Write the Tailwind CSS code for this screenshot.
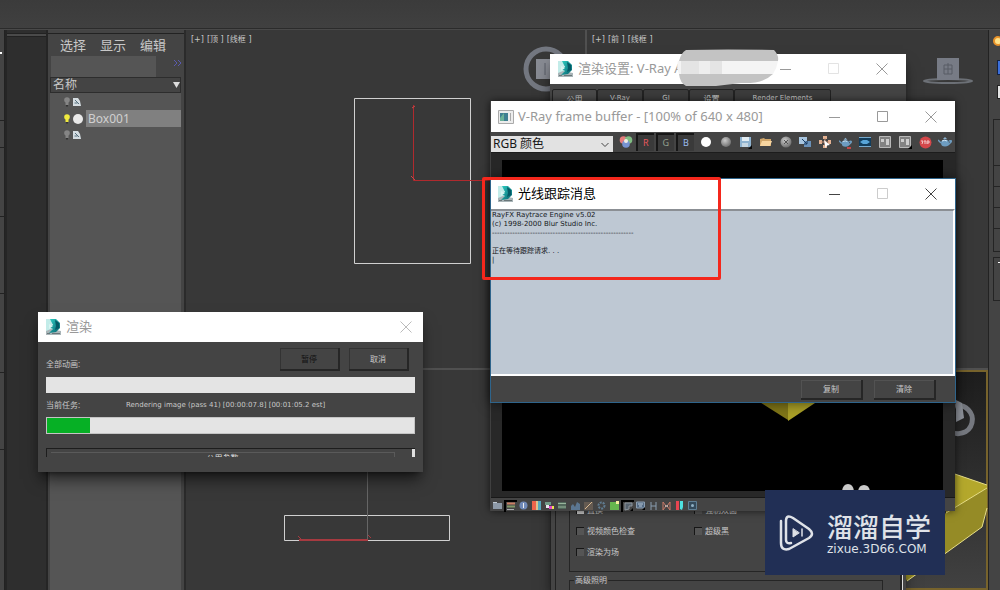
<!DOCTYPE html>
<html lang="zh-CN">
<head>
<meta charset="utf-8">
<meta name="viewport" content="width=device-width, initial-scale=1">
<title>V-Ray 渲染</title>
<script src="https://cdn.jsdelivr.net/npm/@tailwindcss/browser@4"></script>
</head>
<body class="bg-[#383838] font-['Noto_Sans','Noto_Sans_CJK_SC',sans-serif] text-[#c8c8c8]">
<svg class="absolute size-0" aria-hidden="true">
  <defs>
    <linearGradient id="teal" x1="0" y1="0" x2="1" y2="1"><stop offset="0" stop-color="#2fd0c4"/><stop offset="1" stop-color="#045f6c"/></linearGradient>
    <radialGradient id="ball" cx=".4" cy=".35" r=".7"><stop offset="0" stop-color="#c9c9c9"/><stop offset="1" stop-color="#6a6a6a"/></radialGradient>
  </defs>
  <symbol id="max" viewBox="0 0 16 16">
    <path d="M0 0h9l-4 8 4 5H0z" fill="#c3ece9"/><path d="M0 12l5-2 10 2v4H0z" fill="#a9b5b8"/>
    <path d="M4 0h6l4 4v5l-4 4-7 1 4-4-4-2 4-2z" fill="url(#teal)"/>
    <path d="M3 5l4 2-4 3z" fill="#d9f5f2"/><path d="M9 1l4 3v5l-4 2 1-4z" fill="#045a66"/>
    <path d="M1 14.500h3M6 14.500h8" stroke="#6b777a"/>
  </symbol>
  <symbol id="min" viewBox="0 0 12 12"><path d="M0 6.500h11" stroke="currentColor"/></symbol>
  <symbol id="sq" viewBox="0 0 12 12"><path d="M.5 .5h10v10H.5z" fill="none" stroke="currentColor"/></symbol>
  <symbol id="x" viewBox="0 0 12 12"><path d="M.5 .5l11 11M11.500 .5l-11 11" fill="none" stroke="currentColor"/></symbol>
  <symbol id="bulb" viewBox="0 0 6 10"><circle cx="3" cy="3" r="2.800" fill="currentColor"/><path d="M1.500 5h3v3h-3z" fill="currentColor"/><path d="M2 8h2v1.500H2z" fill="#333"/></symbol>
  <symbol id="obj" viewBox="0 0 8 8"><path d="M0 0h5l2 3 1 5H0z" fill="#d5dde2"/><path d="M2 2l4 4M1.500 5h3" stroke="#56707e"/></symbol>
  <symbol id="pot" viewBox="0 0 14 14"><ellipse cx="7" cy="8" rx="4" ry="3.500" fill="#6d9cc0"/><path d="M3 8L0 5M11 6q3-1 2 1l-3 3" stroke="#6d9cc0" stroke-width="1.500" fill="none"/><path d="M5 4h4l-2-2z" fill="#8fb5d2"/><path d="M4 6q3-1.500 5 0" stroke="#d3e6f4" fill="none"/></symbol>
</svg>

<main class="relative flex min-h-screen w-full flex-col overflow-hidden">
  <header class="h-[29px] shrink-0 border-b border-[#2b2b2b] bg-linear-to-b from-[#3b3b3b] to-[#404040]"></header>
  <div class="flex flex-1 border-t border-[#494949]">
    <div class="w-[5px] shrink-0 border-r border-[#222] bg-[#444] pt-[22px]">
      <div class="h-[2px] w-[2px] bg-white"></div>
      <div class="mt-[66px] h-[28px] border-y border-[#222]"></div>
      <div class="mt-[68px] h-[78px] border-y border-[#222]"></div>
      <div class="mt-[78px] h-[78px] border-y border-[#222]"></div>
    </div>
    <div class="w-[43px] shrink-0 border-x-2 border-[#252525] bg-[#2e2e2e] pt-[3px]"><div class="h-1 border-y border-[#222] bg-[#4a4a4a]"></div></div>

    <aside class="flex w-[138px] shrink-0 flex-col border-r-2 border-[#2b2b2b] bg-[#444] pt-[3px]">
      <nav class="flex h-[23px] items-center gap-[14px] border-t border-[#222] pl-3 text-[13px] leading-4">
        <a href="#select">选择</a><a href="#display">显示</a><a href="#edit">编辑</a>
      </nav>
      <div class="flex h-[21px] justify-between pr-[2px] pl-[3px]">
        <input aria-label="搜索" class="h-[21px] w-[105px] bg-[#555] outline-none">
        <button aria-label="更多" class="flex pt-[3px]"><svg class="h-2 w-[9px]" viewBox="0 0 9 8"><path d="M1 1l3 3-3 3M5 1l3 3-3 3" fill="none" stroke="#5a5ab0"/></svg></button>
      </div>
      <div class="mr-[3px] ml-[2px] flex h-4 items-center justify-between border border-[#2d2d2d] bg-[#444] pl-[2px] text-[12px] leading-4">
        <span>名称</span><svg class="h-2 w-[7px]" viewBox="0 0 7 8"><path d="M0 1h7L3.500 7z" fill="#ddd"/></svg>
      </div>
      <ul class="mr-[3px] ml-[2px] flex flex-1 flex-col bg-[#555]">
        <li class="flex h-[17px] items-center gap-[3px] pl-[14px]"><svg class="h-[10px] w-[6px] text-[#858585]"><use href="#bulb"/></svg><svg class="h-2 w-2"><use href="#obj"/></svg></li>
        <li class="flex h-[17px] items-center gap-[3px] pl-[14px]"><svg class="h-[10px] w-[6px] text-[#f0ea3f]"><use href="#bulb"/></svg><span class="size-[10px] rounded-full bg-[#e9e9e9]"></span><span class="h-[17px] flex-1 bg-[#808080] pl-[2px] text-[12px] leading-[17px] text-[#d0d0d0]">Box001</span></li>
        <li class="flex h-[15px] items-center gap-[3px] pl-[14px]"><svg class="h-[10px] w-[6px] text-[#858585]"><use href="#bulb"/></svg><svg class="h-2 w-2"><use href="#obj"/></svg></li>
      </ul>
    </aside>

    <section class="grid flex-1 grid-cols-2 grid-rows-[17fr_11fr] overflow-hidden bg-[#383838] font-['DejaVu_Sans','Noto_Sans_CJK_SC',sans-serif] text-[8px] leading-[10px]">
      <div class="relative border-r-2 border-b-2 border-[#505050] pt-[5px] pl-[5px]">
        <p class="flex gap-[3px]"><span>[+]</span><span>[顶 ]</span><span>[线框 ]</span></p>
        <svg class="absolute top-0 left-0 h-[340px] w-[400px]" viewBox="186 30 400 340" fill="none">
          <path d="M354.500 98.500h116v165h-116z" stroke="#d0d0d0"/>
          <path d="M413.500 105v75.500H490" stroke="#b02a2e"/><path d="M412 108l3-2M411 176l4 4" stroke="#c94848"/>
          <circle cx="546" cy="69" r="20" stroke="#737780" stroke-width="5"/>
          <path d="M536 59h20v20h-20z" fill="#888b93"/><path d="M545 63v12" stroke="#5a5e68"/>
        </svg>
      </div>
      <div class="relative border-b-2 border-[#505050] pt-[5px] pl-[5px]">
        <p class="flex gap-[3px]"><span>[+]</span><span>[前 ]</span><span>[线框 ]</span></p>
        <svg class="absolute top-0 left-0 h-[340px] w-[400px]" viewBox="587 30 400 340" fill="none">
          <ellipse cx="948" cy="81" rx="24" ry="2" stroke="#6c7076" stroke-width="2"/>
          <path d="M937 58h22v22h-22z" fill="#777b85"/><path d="M944 65h8v9h-8zM948 63v11M944 69h8" stroke="#585c65"/>
        </svg>
      </div>
      <div class="relative border-r-2 border-[#505050]">
        <svg class="absolute top-0 left-0 h-[220px] w-[400px]" viewBox="186 370 400 220" fill="none">
          <path d="M284.500 515.500h165v25h-165z" stroke="#d0d0d0"/>
          <path d="M367.500 470v70" stroke="#666"/><path d="M299 540h69" stroke="#a63a40" stroke-width="2"/><path d="M298 536l4 4M368 535l3 3" stroke="#a63a40"/>
        </svg>
      </div>
      <div class="relative border-2 border-[#77632c] bg-linear-to-b from-[#1d1d1d] to-[#414141]">
        <svg class="absolute -top-[2px] right-[-2px] h-[220px] w-[400px]" viewBox="587 370 400 220" fill="none">
          <path d="M954 406a14 14 0 1 1-6 24" stroke="#75787f" stroke-width="5"/>
          <path d="M955 400l6 3 2 15-8 4z" fill="#8a8e96"/>
          <path d="M945 471l41 14v3l-41 26z" fill="#b4a82c"/>
          <path d="M890 550l55-37 41-25v20l-5 19-75 54z" fill="#958b26"/>
          <path d="M945 471l41 14M945 513l41-25M986 508l-5 19-75 54" stroke="#e8df86"/>
        </svg>
      </div>
    </section>

    <aside class="w-3 shrink-0 overflow-hidden border-l border-[#222] bg-[#444] pt-[6px] pl-1">
      <div class="size-[10px] rounded-full border-2 border-[#e8922a] bg-[#ffe28a]"></div>
      <div class="mt-[14px] ml-1 h-[15px] w-4 border border-[#152342] bg-[#3b6fdc]"></div>
      <div class="mt-[10px] ml-1 h-[14px] w-4 border border-[#222] bg-[#e4e4e4]"></div>
      <div class="mt-5 h-[47px] w-4 border border-[#242424]"></div>
      <div class="h-[21px] w-4 border border-t-0 border-[#242424]"></div>
      <div class="h-[21px] w-4 border border-t-0 border-[#242424]"></div>
      <div class="h-[21px] w-4 border border-t-0 border-[#242424]"></div>
      <div class="h-[23px] w-4 border border-t-0 border-[#242424]"></div>
      <div class="mt-[5px] h-[44px] w-4 border border-[#242424] pt-1 pl-1"><div class="h-px w-2 bg-white"></div></div>
    </aside>
  </div>

  <!-- Render settings -->
  <section class="absolute top-[54px] bottom-0 left-[550px] flex w-[356px] flex-col bg-[#444] shadow-lg shadow-black/60">
    <header class="flex h-[30px] shrink-0 items-center bg-white pl-2 text-[#999]">
      <svg class="size-4"><use href="#max"/></svg>
      <h2 class="ml-1 flex-1 text-[13px] whitespace-nowrap">渲染设置: V-Ray A</h2>
      <button aria-label="最小化" class="mr-9"><svg class="size-3"><use href="#min"/></svg></button>
      <button aria-label="最大化" class="mr-9 text-[#e3e3e3]"><svg class="size-3"><use href="#sq"/></svg></button>
      <button aria-label="关闭" class="mr-[18px]"><svg class="size-3"><use href="#x"/></svg></button>
    </header>
    <svg class="absolute -top-[5px] left-[126px] h-[38px] w-[103px]" viewBox="0 0 103 38" fill="#c3c3c3">
      <path d="M10 1Q50 0 98 1q5 5 4 11H3Q5 4 10 1zM3 25h94Q87 35 65 34L40 37H10Q4 34 3 25z"/><path d="M2 12h100q-1 7-5 13H3Q0 18 2 12z" fill="#f4f4f4"/><path d="M5 12h18v13H5zM34 12h12v13H34z" fill="#e4e4e4"/><path d="M23 12h11v13H23z" fill="#eee"/>
    </svg>
    <nav class="ml-[2px] flex pt-[5px] text-[8px] leading-[15px]">
      <button class="h-[18px] w-[45px] rounded-t-xs border border-[#222] bg-[#4a4a4a]">公用</button>
      <button class="h-[18px] w-[46px] rounded-t-xs border border-[#222] bg-[#3c3c3c] font-['DejaVu_Sans'] text-[7px]">V-Ray</button>
      <button class="h-[18px] w-[46px] rounded-t-xs border border-[#222] bg-[#3c3c3c] font-['DejaVu_Sans'] text-[7px]">GI</button>
      <button class="h-[18px] w-[45px] rounded-t-xs border border-[#222] bg-[#3c3c3c]">设置</button>
      <button class="h-[18px] w-[97px] rounded-t-xs border border-[#222] bg-[#3c3c3c] font-['DejaVu_Sans'] text-[7px]">Render Elements</button>
    </nav>
    <div class="flex flex-1 border-l border-[#222] pl-1">
      <div class="flex flex-1 flex-col border-l border-[#222] pr-[17px] pl-[13px] text-[8px] leading-3">
        <fieldset class="flex flex-1 flex-col justify-end border border-[#252525] px-[6px] pb-[13px]">
          <div class="grid grid-cols-[118px_1fr] gap-y-[9px]">
            <label class="flex items-center gap-[3px]"><input type="checkbox" checked class="size-2 appearance-none border-t border-l border-[#161616] bg-[#555] checked:bg-[#ccc]">置换</label>
            <label class="flex items-center gap-[3px]"><input type="checkbox" class="size-2 appearance-none border-t border-l border-[#161616] bg-[#555]">强制双面</label>
            <label class="flex items-center gap-[3px]"><input type="checkbox" class="size-2 appearance-none border-t border-l border-[#161616] bg-[#555]">视频颜色检查</label>
            <label class="flex items-center gap-[3px]"><input type="checkbox" class="size-2 appearance-none border-t border-l border-[#161616] bg-[#555]">超级黑</label>
            <label class="flex items-center gap-[3px]"><input type="checkbox" class="size-2 appearance-none border-t border-l border-[#161616] bg-[#555]">渲染为场</label>
          </div>
        </fieldset>
        <fieldset class="mt-[2px] h-4 border border-b-0 border-[#252525] pl-1"><legend class="px-[1px]">高级照明</legend></fieldset>
      </div>
      <div class="mr-[3px] w-[3px] border-l-2 border-[#222] bg-[#ddd]"></div>
    </div>
  </section>

  <!-- Frame buffer -->
  <section class="absolute top-[101px] left-[490px] flex h-[410px] w-[465px] flex-col border-l border-[#404040] bg-[#444] shadow-[0_0_8px_rgba(0,0,0,0.65)]">
    <header class="flex h-[31px] shrink-0 items-center bg-white pl-[7px] text-[#999]">
      <svg class="h-[14px] w-4" viewBox="0 0 16 14"><path d="M.5 .5h15v13H.5z" fill="#ececec" stroke="#aaa"/><path d="M2 3h8v8H2z" fill="#3f7f91"/><path d="M2 8l4-5v8H2z" fill="#6bb197"/><path d="M12.500 3v8" stroke="#aaa"/></svg>
      <h2 class="ml-1 flex-1 text-[13px] whitespace-nowrap">V-Ray frame buffer - [100% of 640 x 480]</h2>
      <button aria-label="最小化" class="mr-9"><svg class="size-3"><use href="#min"/></svg></button>
      <button aria-label="最大化" class="mr-9"><svg class="size-3"><use href="#sq"/></svg></button>
      <button aria-label="关闭" class="mr-[18px]"><svg class="size-3"><use href="#x"/></svg></button>
    </header>
    <div class="flex h-[21px] shrink-0 items-center border-b border-[#1c1c1c]">
      <div class="relative mt-1 mr-[3px] h-4 w-[122px] shrink-0">
        <select aria-label="通道" class="block h-4 w-full appearance-none bg-[#e2e2e2] pl-[2px] text-[12px] leading-4 text-[#161616]"><option>RGB 颜色</option></select>
        <svg class="pointer-events-none absolute top-[6px] right-1 h-[6px] w-2" viewBox="0 0 8 6" fill="none"><path d="M.5 1L4 4.500 7.500 1" stroke="#444"/></svg>
      </div>
      <button aria-label="通道混合" class="flex w-5 justify-center"><svg class="size-[14px]" viewBox="0 0 14 14"><circle cx="4.500" cy="5" r="3.800" fill="#e57b7b"/><circle cx="9.500" cy="5" r="3.800" fill="#80bd83"/><circle cx="7" cy="9" r="3.800" fill="#7793d2"/><circle cx="7" cy="6" r="2" fill="#f1ece5"/></svg></button>
      <button class="h-[18px] w-[18px] border-t-2 border-l-2 border-[#171717] bg-[#3a3a3a] text-[9px] leading-4 text-[#e8585e]">R</button>
      <button class="ml-[2px] h-[18px] w-[18px] border-t-2 border-l-2 border-[#171717] bg-[#3a3a3a] text-[9px] leading-4 text-[#93a08e]">G</button>
      <button class="ml-[2px] h-[18px] w-[18px] border-t-2 border-l-2 border-[#171717] bg-[#3a3a3a] text-[9px] leading-4 text-[#9abdee]">B</button>
      <button aria-label="Alpha" class="ml-[2px] flex w-5 justify-center"><span class="size-[10px] rounded-full bg-white"></span></button>
      <button aria-label="单色" class="flex w-5 justify-center"><svg class="size-[10px]" viewBox="0 0 10 10"><circle cx="5" cy="5" r="5" fill="url(#ball)"/></svg></button>
      <button aria-label="保存" class="flex w-5 justify-center"><svg class="size-[14px]" viewBox="0 0 14 14"><path d="M1 2h11v10H1z" fill="#8eb2cf"/><path d="M3 2h7v4H3z" fill="#e3edf3"/><path d="M3 8h6v4H3z" fill="#c4d5e1"/><path d="M13 10v4H9z" fill="#090909"/></svg></button>
      <button aria-label="打开" class="flex w-5 justify-center"><svg class="size-[14px]" viewBox="0 0 14 14"><path d="M1 4l4-1 1 1h6v7H1z" fill="#d2a76b"/><path d="M3 6h10l-2 5H1z" fill="#f7d5a0"/></svg></button>
      <button aria-label="清除图像" class="flex w-5 justify-center"><svg class="size-[12px]" viewBox="0 0 12 12"><circle cx="6" cy="6" r="5.500" fill="url(#ball)"/><path d="M4 4l4 4M8 4L4 8" stroke="#555"/></svg></button>
      <button aria-label="复制到 MAX" class="flex w-5 justify-center"><svg class="size-[14px]" viewBox="0 0 14 14"><path d="M1 2h8v7H1z" fill="#a8c5df"/><path d="M6 6h7v6H6z" fill="#6a91b9"/><path d="M4 4l5 5M9 6v3H6" stroke="#183b63" fill="none"/></svg></button>
      <button aria-label="跟踪鼠标" class="flex w-5 justify-center"><svg class="size-[14px]" viewBox="0 0 14 14"><path d="M5 1h4v3H5zM5 10h4v3H5zM1 5h3v4H1zM10 5h3v4h-3z" fill="#e4b292"/><path d="M7 3v8M3 7h8" stroke="#c98e70"/><path d="M6 5l6 5-3 .5L7.500 13z" fill="#fff"/></svg></button>
      <button aria-label="区域渲染" class="flex w-5 justify-center"><svg class="size-[13px]"><use href="#pot"/><path d="M8 12h4" stroke="#c44848" stroke-width="2"/></svg></button>
      <button aria-label="链接" class="flex w-5 justify-center"><svg class="size-[14px]" viewBox="0 0 14 14"><path d="M1 2h12v10H1z" fill="#123d5c"/><path d="M1 2.500h12M1 11.500h12" stroke="#76a9cd"/><path d="M2 7l3-2h4l3 2-3 2H5z" fill="#58a5d8"/></svg></button>
      <button aria-label="比较" class="flex w-5 justify-center"><svg class="size-[14px]" viewBox="0 0 14 14"><path d="M1.500 1.500h11v11h-11z" fill="#828282" stroke="#b8b8b8"/><path d="M3 4h3v3H3zM8 4h3v6H8z" fill="#ccc"/></svg></button>
      <button aria-label="比较选项" class="flex w-5 justify-center"><svg class="size-[14px]" viewBox="0 0 14 14"><path d="M1.500 1.500h11v11h-11z" fill="#828282" stroke="#b8b8b8"/><path d="M3 4h3v3H3zM8 4h3v6H8z" fill="#ccc"/><path d="M14 10v4h-4z" fill="#000"/></svg></button>
      <button aria-label="停止" class="flex w-5 justify-center"><svg class="size-[13px]" viewBox="0 0 13 13"><circle cx="6.500" cy="6.500" r="6" fill="#d4474a"/><path d="M2 5h2L3 8M5 5h2M6 5v3M8 8V5h2v2H8" stroke="#f3c9c9" fill="none"/></svg></button>
      <button aria-label="渲染" class="flex w-5 justify-center"><svg class="size-[14px]"><use href="#pot"/></svg></button>
    </div>
    <div class="flex-1 bg-[#282828] px-3 pt-[7px] pb-[6px] pl-[11px]">
      <svg class="size-full bg-black" viewBox="502 160 441 331" preserveAspectRatio="none"><path d="M755 399l33 21V399z" fill="#807618"/><path d="M788 399h33l-33 22z" fill="#aaa027"/><path d="M842 491q1-7 6-7t6 7M858 491q1-6 6-6t6 6" fill="#c9c9c9"/></svg>
    </div>
    <div class="flex h-4 shrink-0 items-center border-t border-[#181818] text-[#91a8c1]">
      <button aria-label="颜色校正" class="flex w-[13px] justify-center"><svg class="size-[9px]" viewBox="0 0 9 9"><path d="M0 2h9v6H0z" fill="#8e9aa8"/><path d="M0 1h4v1H0z" fill="#c0c8d0"/></svg></button>
      <button aria-label="层" class="flex h-3 w-[13px] items-center justify-center border-t-2 border-l-2 border-black"><svg class="size-[9px]" viewBox="0 0 9 9"><path d="M0 1.500h8" stroke="#cc8065" stroke-width="2"/><path d="M0 4.500h8" stroke="#819868" stroke-width="2"/><path d="M0 7.500h7" stroke="#adafb3"/></svg></button>
      <button aria-label="像素信息" class="flex w-[13px] justify-center"><svg class="size-[9px]" viewBox="0 0 9 9"><circle cx="4.500" cy="4.500" r="4" fill="#7089b7"/><path d="M4.500 2v5" stroke="#eee"/></svg></button>
      <button aria-label="白平衡" class="flex w-[13px] justify-center"><svg class="size-[9px]" viewBox="0 0 9 9"><path d="M0 0h4v9H0z" fill="#ed644b"/><path d="M4 0h2v9H4z" fill="#dbc38c"/><path d="M6 0h3v9H6z" fill="#56a9bd"/></svg></button>
      <button aria-label="色相" class="flex w-[13px] justify-center"><svg class="size-[9px]" viewBox="0 0 9 9"><path d="M0 1h6v3H0z" fill="#709b87"/><path d="M1 4h3v3H1z" fill="#e7e9ee"/><path d="M4 5h3v3H4z" fill="#e34ac8"/><path d="M7 5h2v3H7z" fill="#eee34d"/></svg></button>
      <button aria-label="色彩平衡" class="flex w-[13px] justify-center"><svg class="size-[9px]" viewBox="0 0 9 9"><path d="M0 1h8v7H0z" fill="#51685b"/><path d="M0 2.500h8M0 6h8" stroke="#98b49b"/></svg></button>
      <button aria-label="色阶" class="flex w-[13px] justify-center"><svg class="size-[9px]" viewBox="0 0 9 9"><path d="M0 9V5l2-2 2 3 2-5 3 2v6z" fill="#5b7691"/></svg></button>
      <button aria-label="曲线" class="flex w-[13px] justify-center"><svg class="size-[9px]" viewBox="0 0 9 9"><path d="M0 1h9v8H0z" fill="#645a51"/><path d="M1 8l7-7" stroke="#d8b890"/></svg></button>
      <button aria-label="曝光" class="flex w-[13px] justify-center"><svg class="size-[9px]" viewBox="0 0 9 9"><circle cx="4.500" cy="4.500" r="3" fill="none" stroke="#607c91" stroke-width="2" stroke-dasharray="2 1"/></svg></button>
      <button aria-label="背景" class="flex w-[13px] justify-center"><svg class="size-[9px]" viewBox="0 0 9 9"><path d="M0 1h9v8H0z" fill="#66b64e"/><path d="M6 0h3v3H6z" fill="#f4ed9c"/></svg></button>
      <button aria-label="sRGB" class="flex h-3 w-[13px] items-center justify-center border-t-2 border-l-2 border-black"><svg class="size-[9px]" viewBox="0 0 9 9"><path d="M1 8V1h7v3H5v3z" fill="#55616d" stroke="#8d949b"/><path d="M9 6v3H6z"/></svg></button>
      <button aria-label="LUT" class="flex w-[13px] justify-center"><svg class="size-[9px]" viewBox="0 0 9 9"><path d="M.5 1h8v6h-8z" fill="#536a83" stroke="#8b9db0"/><path d="M2 3h5M3 5h3" stroke="#bcc9d6"/><path d="M9 6v3H6z"/></svg></button>
      <button aria-label="H" class="flex w-[13px] justify-center"><svg class="size-[9px]" viewBox="0 0 9 9"><path d="M2 1v8M7 1v8M2 5h5" stroke="#899db0"/></svg></button>
      <button aria-label="镜像" class="flex w-[13px] justify-center"><svg class="size-[9px]" viewBox="0 0 9 9"><path d="M1 1v8l3-4zM8 1v8L5 5z" fill="none" stroke="#c87867"/><path d="M3 5h3" stroke="#ddd"/></svg></button>
      <button aria-label="立体" class="flex w-[13px] justify-center"><svg class="size-[9px]" viewBox="0 0 9 9"><path d="M1 0h3v9H1z" fill="#e74450"/><path d="M5 0h3v6l-1 3-2-1z" fill="#4ee1e0"/></svg></button>
      <button aria-label="信息" class="flex w-[13px] justify-center"><svg class="size-[9px]" viewBox="0 0 9 9"><path d="M.5 .5h8v8h-8z" fill="#334a5b" stroke="#5f7f94"/><circle cx="4.500" cy="4.500" r="1.500" fill="#8fb0c4"/></svg></button>
    </div>
  </section>

  <!-- Raytrace messages -->
  <section class="absolute top-[178px] left-[490px] flex h-[225px] w-[466px] flex-col border border-[#2e648b] bg-[#444] shadow-[0_0_12px_rgba(0,0,0,0.6)]">
    <header class="flex h-[30px] shrink-0 items-center bg-white pl-[7px] text-[#444]">
      <svg class="size-4"><use href="#max"/></svg>
      <h2 class="ml-1 flex-1 text-[13px] text-black">光线跟踪消息</h2>
      <button aria-label="最小化" class="mr-9"><svg class="size-3"><use href="#min"/></svg></button>
      <button aria-label="最大化" class="mr-9 text-[#ccc]"><svg class="size-3"><use href="#sq"/></svg></button>
      <button aria-label="关闭" class="mr-[18px]"><svg class="size-3"><use href="#x"/></svg></button>
    </header>
    <textarea aria-label="消息" spellcheck="false" class="flex-1 resize-none overflow-hidden border-t-2 border-r-2 border-b-2 border-t-[#8b8f94] border-r-white border-b-white bg-[#bec8d3] pl-[1px] font-['DejaVu_Sans','Noto_Sans_CJK_SC',sans-serif] text-[7px] leading-[9px] text-[#15181c] outline-none">RayFX Raytrace Engine v5.02
(c) 1998-2000 Blur Studio Inc.
--------------------------------------------------------

正在等待跟踪请求. . .
|</textarea>
    <footer class="flex h-[26px] shrink-0 items-center justify-end gap-[11px] pt-[2px] pr-[19px] text-[8px]">
      <button class="h-5 w-[62px] border-r-2 border-b-2 border-[#262626] bg-[#444] shadow-[inset_1px_1px_0_#525252]">复制</button>
      <button class="h-5 w-[62px] border-r-2 border-b-2 border-[#262626] bg-[#444] shadow-[inset_1px_1px_0_#525252]">清除</button>
    </footer>
  </section>

  <div class="pointer-events-none absolute top-[177px] left-[482px] h-[103px] w-[239px] rounded-xs border-[3px] border-[#f4271c]"></div>

  <!-- Render progress -->
  <section class="absolute top-[312px] left-[38px] flex h-[160px] w-[385px] flex-col bg-[#444] shadow-lg shadow-black/60">
    <header class="flex h-[30px] shrink-0 items-center bg-white pl-2 text-[#999]">
      <svg class="size-4"><use href="#max"/></svg>
      <h2 class="ml-1 flex-1 text-[13px]">渲染</h2>
      <button aria-label="关闭" class="mr-[11px] text-[#bbb]"><svg class="size-3"><use href="#x"/></svg></button>
    </header>
    <div class="flex flex-1 flex-col px-2 pt-[6px] text-[8px] leading-3">
      <div class="flex h-[29px]">
        <span class="flex-1 pt-[10px]">全部动画:</span>
        <button class="mr-[9px] h-[23px] w-[60px] border-r-2 border-b-2 border-[#262626] text-[#111] shadow-[inset_1px_1px_0_#333]">暂停</button>
        <button class="mr-[6px] h-[23px] w-[60px] border-r-2 border-b-2 border-[#262626] shadow-[inset_1px_1px_0_#333]">取消</button>
      </div>
      <div role="progressbar" aria-label="全部动画" class="h-4 bg-[#e4e4e4]"></div>
      <div class="flex h-6 items-center"><span class="w-20">当前任务:</span><span class="font-['DejaVu_Sans'] text-[7px]">Rendering image (pass 41) [00:00:07.8] [00:01:05.2 est]</span></div>
      <div role="progressbar" aria-label="当前任务" aria-valuenow="12" class="h-[17px] border border-[#c4c4c4] bg-[#e4e4e4]"><div class="h-full bg-[#06b025]" style="width:11.7%"></div></div>
      <div class="mt-[14px] flex h-[9px] justify-between overflow-hidden border-t border-l border-[#1d1d1d]">
        <div class="mt-[3px] ml-1 w-[344px] border-t border-r border-[#5a5a5a] text-center leading-[10px] text-[#ddd]">公用参数</div>
        <div class="h-full w-[3px] bg-[#e0e0e0]"></div>
      </div>
    </div>
  </section>

  <!-- Site badge -->
  <a href="#zixue" class="absolute top-[490px] left-[765px] flex h-[85px] w-[180px] items-center gap-[13px] bg-[#212f55] pl-[14px] text-[#dfe2e8]">
    <svg class="h-9 w-[35px] shrink-0" viewBox="0 0 35 36" fill="none" stroke="currentColor" stroke-width="2.500" stroke-linecap="round" stroke-linejoin="round"><path d="M2 6v22q0 8 8 6l20-11q6-4 0-9L14 3Q7-1 7 6v19q0 4 5 3"/><path d="M14 14v8l6-4z" fill="currentColor" stroke-width="1"/><path d="M23 14v7" stroke-width="1.500"/></svg>
    <span class="flex flex-col whitespace-nowrap"><span class="text-[26px] leading-8 font-medium">溜溜自学</span><span class="font-['DejaVu_Sans'] text-[12px] leading-3">zixue.3D66.COM</span></span>
  </a>
</main>
</body>
</html>
